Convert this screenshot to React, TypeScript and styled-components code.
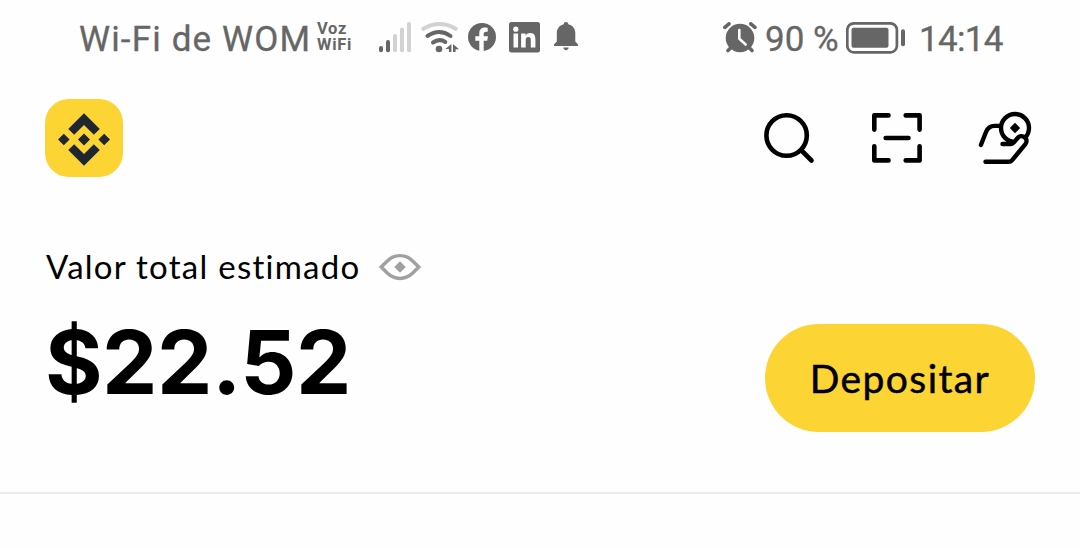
import React from "react";
import styled, { createGlobalStyle } from "styled-components";

const GlobalStyle = createGlobalStyle`
  body {
    margin: 0;
    background-color: #fefefe;
    font-family: "Lato", "Open Sans", sans-serif;
    color: #000;
  }
`;

const Screen = styled.div`
  width: 1080px;
  height: 548px;
  overflow: hidden;
`;

const StatusBar = styled.div`
  display: flex;
  justify-content: space-between;
  height: 76px;
  padding: 0 76px 0 79px;
  box-sizing: border-box;
  color: #666;
`;

const StatusGroup = styled.div`
  display: flex;
  align-items: center;
`;

const StatusText = styled.span<{ width: number; spacing?: number }>`
  width: ${({ width }) => width}px;
  padding-top: 3px;
  font-family: "Roboto", sans-serif;
  font-size: 35px;
  letter-spacing: ${({ spacing = 0 }) => spacing}px;
  line-height: 40px;
  white-space: nowrap;
  -webkit-text-stroke: 0.3px #666;
`;

const CallBadge = styled.div`
  width: 68px;
  padding: 0 0 3px 7px;
  box-sizing: border-box;
  font-family: "Roboto", sans-serif;
  font-size: 16.5px;
  font-weight: 700;
  line-height: 16px;
  letter-spacing: 0.7px;
`;

const Icon = styled.svg`
  display: block;
  flex: none;
`;

const Header = styled.header`
  display: flex;
  align-items: center;
  justify-content: space-between;
  padding: 23px 45px 0;
`;

const Logo = styled.div`
  display: flex;
  align-items: center;
  justify-content: center;
  width: 78px;
  height: 78px;
  padding-top: 2px;
  box-sizing: border-box;
  border-radius: 24px;
  background-color: #fcd535;
`;

const Actions = styled.nav`
  display: flex;
  gap: 48px;
`;

const Balance = styled.section`
  display: flex;
  align-items: flex-end;
  justify-content: space-between;
  height: 255px;
  padding: 0 45px;
`;

const Summary = styled.div`
  height: 190px;
`;

const Label = styled.div`
  display: flex;
  align-items: center;
  height: 50px;
`;

const LabelText = styled.span`
  width: 332px;
  padding: 0 0 2px 1px;
  font-size: 33px;
  letter-spacing: 1.25px;
  line-height: 40px;
  white-space: nowrap;
`;

const Amount = styled.div`
  margin-top: 16px;
  font-family: "Inter", "Open Sans", sans-serif;
  font-size: 88px;
  font-weight: 700;
  line-height: 108px;
  letter-spacing: -0.5px;
`;

const DepositButton = styled.button`
  width: 270px;
  height: 108px;
  padding: 0;
  border: none;
  border-radius: 54px;
  background-color: #fcd535;
  color: #000;
  font-family: inherit;
  font-size: 39px;
  letter-spacing: 1.4px;
  -webkit-text-stroke: 0.5px #000;
`;

const Divider = styled.hr`
  height: 2px;
  margin: 60px 0 0;
  border: none;
  background-color: #ebebeb;
`;

const SignalIcon = () => (
  <Icon width="43" height="32" viewBox="378 21 43 32" fill="#d2d2d2">
    <rect x="379" y="45" width="4" height="6.3" rx="2" fill="#666" />
    <rect x="386" y="39" width="4" height="12.3" rx="2" fill="#666" />
    <rect x="393" y="33" width="4" height="18.3" rx="2" />
    <rect x="400" y="26.5" width="4" height="24.8" rx="2" />
    <rect x="407" y="21" width="4" height="30.3" rx="2" />
  </Icon>
);

const WifiIcon = () => (
  <Icon width="47" height="32" viewBox="421 21 47 32" fill="none" stroke="#666" strokeWidth="4" strokeLinecap="round">
    <path d="M423.3 27.8Q439.5 18.3 455.7 27.8" stroke="#d2d2d2" />
    <path d="M427.5 35Q439.5 27 450.5 35" />
    <path d="M433 41.5Q439.5 37 445.3 41" />
    <circle cx="439" cy="48" r="3.3" fill="#666" stroke="none" />
    <path d="M451.4 43v8h-2.4v-3h-3.6zM453 51v-8l6 5.2h-3.4v2.8z" fill="#666" stroke="none" />
  </Icon>
);

const FacebookIcon = () => (
  <Icon width="41" height="32" viewBox="468 21 41 32">
    <circle cx="482" cy="36" r="14" fill="#666" />
    <path
      d="M479.3 50V39.8H475.3V35.3H479.3V32.2C479.3 28.5 481.6 26.6 484.9 26.6C486.3 26.6 487.7 26.9 487.7 26.9V30.8H486C484.2 30.8 483.7 31.8 483.7 33V35.3H488L487.2 39.8H483.7V50Z"
      fill="#fefefe"
    />
  </Icon>
);

const LinkedinIcon = () => (
  <Icon width="45" height="32" viewBox="509 21 45 32">
    <rect x="509" y="21" width="31" height="30.5" rx="2.5" fill="#666" />
    <g fill="#fefefe">
      <circle cx="515.8" cy="28.2" r="2.6" />
      <path d="M513.5 32.5h4.6v14h-4.6zM521.1 32.5h4.4v2c.8-1.4 2.3-2.4 4.6-2.4 4.4 0 5.3 2.9 5.3 6.7v7.7h-4.6v-6.9c0-1.7-.1-3.6-2.3-3.6-2.3 0-2.8 1.7-2.8 3.5v7h-4.6z" />
    </g>
  </Icon>
);

const BellIcon = () => (
  <Icon width="25" height="32" viewBox="554 21 25 32" fill="#666">
    <path d="M566 21c1.4 0 2.3.9 2.3 2.2 4.4 1.1 7 4.3 7 9v8.2l2.7 3.2v1.3h-24v-1.3l2.8-3.2v-8.2c0-4.7 2.6-7.9 7-9 0-1.3.8-2.2 2.2-2.2z" />
    <path d="M563.3 46.6h5.4c-.1 1.5-1.2 2.6-2.7 2.6s-2.6-1.1-2.7-2.6z" />
  </Icon>
);

const AlarmIcon = () => (
  <Icon width="42" height="32" viewBox="723 21 42 32" fill="none" stroke="#666" strokeLinecap="round">
    <circle cx="740" cy="37" r="14.3" fill="#666" stroke="none" />
    <path d="M724.8 26.4l4.2-3.6M755 26.4l-4.2-3.6M731 46.5l-3 3M749 46.5l3 3" strokeWidth="3.6" />
    <path d="M739.3 29v8.7l6.3 5.8" stroke="#fefefe" strokeWidth="2.6" />
  </Icon>
);

const BatteryIcon = () => (
  <Icon width="73" height="32" viewBox="846 21 73 32">
    <rect x="847.3" y="22.3" width="49.6" height="29" rx="6.5" fill="none" stroke="#666" strokeWidth="2.7" />
    <rect x="851.5" y="26.7" width="37" height="20" rx="2" fill="#666" />
    <rect x="901" y="28.3" width="4" height="17" rx="2" fill="#666" />
  </Icon>
);

const BrandMark = () => (
  <Icon width="54" height="54" viewBox="0 0 54 54" fill="#202630">
    <path d="M27 1.2L42.8 17l-6 5.8L27 13l-9.8 9.8-6-5.8z" />
    <path d="M27 53.8L42.8 38l-6-5.8L27 42l-9.8-9.8-6 5.8z" />
    <path d="M27 21.5l6 6-6 6-6-6zM6.8 21.7l5.8 5.8-5.8 5.8L1 27.5zM47.2 21.7l5.8 5.8-5.8 5.8-5.8-5.8z" />
  </Icon>
);

const SearchIcon = () => (
  <Icon width="60" height="60" viewBox="759 108 60 60" fill="none" stroke="#000" strokeWidth="4.6" strokeLinecap="round">
    <circle cx="786.6" cy="135.5" r="20.2" />
    <path d="M801.5 150.5l10 10" />
  </Icon>
);

const ScanIcon = () => (
  <Icon
    width="60"
    height="60"
    viewBox="867 108 60 60"
    fill="none"
    stroke="#000"
    strokeWidth="4.6"
    strokeLinecap="round"
    strokeLinejoin="round"
  >
    <path d="M888.5 115.4h-14.2v14.2M905.7 115.4h13.9v14.2M888.5 160.4h-14.2v-14.2M905.7 160.4h13.9v-14.2M885.7 138h22.8" />
  </Icon>
);

const HandCoinIcon = () => (
  <Icon
    width="60"
    height="60"
    viewBox="975 108 60 60"
    fill="none"
    stroke="#000"
    strokeWidth="4.4"
    strokeLinecap="round"
    strokeLinejoin="round"
  >
    <circle cx="1015" cy="128" r="14" />
    <path d="M1015 122.8l5.2 5.2-5.2 5.2-5.2-5.2z" fill="#000" stroke="none" />
    <path
      d="M1002.5 144h8.3c1.3 0 2.2-.5 3-1.5l3.5-4.2c2-2.3 5.2-2.8 7.3-1 2.2 1.8 2.6 4.5.8 6.8l-13.2 16c-1.1 1.3-2.2 1.7-3.8 1.7h-22.6"
      fill="#fefefe"
      stroke="none"
    />
    <path d="M1002.5 144h8.3c1.3 0 2.2-.5 3-1.5l3.5-4.2c2-2.3 5.2-2.8 7.3-1 2.2 1.8 2.6 4.5.8 6.8l-13.2 16c-1.1 1.3-2.2 1.7-3.8 1.7h-22.9" />
    <path d="M980.9 145l5.2-13.2c1.6-3.9 4.2-5.9 8.4-5.9h6" />
  </Icon>
);

const EyeIcon = () => (
  <Icon width="44" height="32" viewBox="378 251 44 32">
    <path
      d="M381.2 267l5.8-5.8c7.6-7.5 18.4-7.5 26 0l5.8 5.8-5.8 5.8c-7.6 7.5-18.4 7.5-26 0z"
      fill="none"
      stroke="#a0a0a0"
      strokeWidth="3.4"
    />
    <path d="M400 261.3l5.7 5.7-5.7 5.7-5.7-5.7z" fill="#a0a0a0" />
  </Icon>
);

const App: React.FC = () => {
  return (
    <Screen>
      <GlobalStyle />
      <StatusBar>
        <StatusGroup>
          <StatusText width={231} spacing={1.15}>
            Wi-Fi de WOM
          </StatusText>
          <CallBadge>
            <div>Voz</div>
            <div>WiFi</div>
          </CallBadge>
          <SignalIcon />
          <WifiIcon />
          <FacebookIcon />
          <LinkedinIcon />
          <BellIcon />
        </StatusGroup>
        <StatusGroup>
          <AlarmIcon />
          <StatusText width={81}>90 %</StatusText>
          <BatteryIcon />
          <StatusText width={85} spacing={-0.7}>
            14:14
          </StatusText>
        </StatusGroup>
      </StatusBar>

      <Header>
        <Logo>
          <BrandMark />
        </Logo>
        <Actions>
          <SearchIcon />
          <ScanIcon />
          <HandCoinIcon />
        </Actions>
      </Header>

      <Balance>
        <Summary>
          <Label>
            <LabelText>Valor total estimado</LabelText>
            <EyeIcon />
          </Label>
          <Amount>$22.52</Amount>
        </Summary>
        <DepositButton>Depositar</DepositButton>
      </Balance>
      <Divider />
    </Screen>
  );
};

export default App;
